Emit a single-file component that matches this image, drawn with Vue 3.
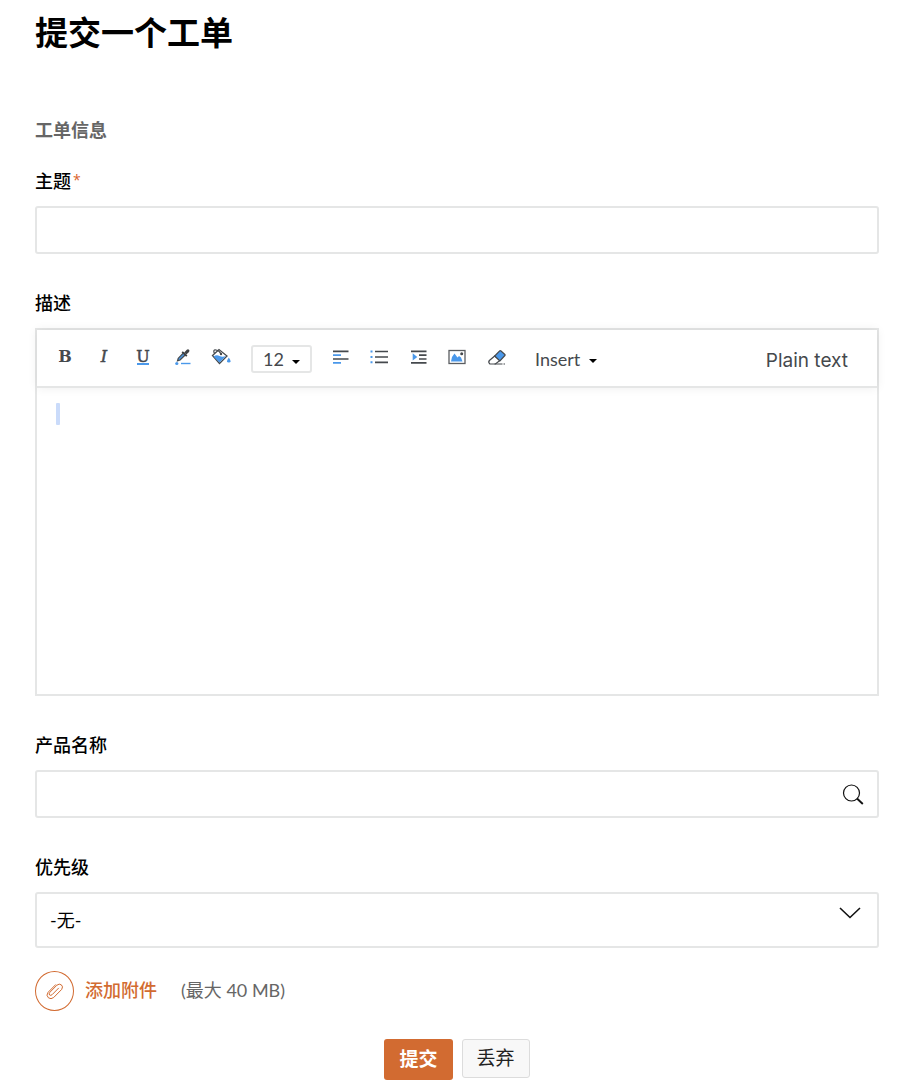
<script setup>
import { ref } from 'vue'

const subject = ref('')
const description = ref('')
const product = ref('')
const priority = ref('none')
const fontSize = ref('12')
</script>

<template>
  <form class="ticket" @submit.prevent>
    <h1 class="title">提交一个工单</h1>
    <h2 class="section">工单信息</h2>

    <div class="field">
      <label for="subject">主题<span class="required">*</span></label>
      <input id="subject" v-model="subject" class="control" type="text" required />
    </div>

    <div class="field">
      <label for="description">描述</label>
      <div class="editor">
        <div class="toolbar">
          <button type="button" class="tool glyph" aria-label="Bold">B</button>
          <button type="button" class="tool glyph italic" aria-label="Italic">I</button>
          <button type="button" class="tool glyph underline" aria-label="Underline">U</button>
          <button type="button" class="tool" aria-label="Font color">
            <svg viewBox="0 0 20 20">
              <path d="M5.500 13.800l.8-2.600 5.200-5.400 2 2-5.400 5.200z" fill="#4c94dc" stroke="#45494d" stroke-width="1.200" />
              <path d="M10.200 4.800l4.600 4.400" stroke="#3f4143" stroke-width="1.800" />
              <path d="M12.200 5.400l2.600-2.600q1.200-1 2.200 0t0 2.200l-2.600 2.600z" fill="#3f4143" />
              <circle cx="4.800" cy="16.500" r="1.600" fill="#4a98ea" />
              <path d="M9 16.500h9.500" stroke="#4a98ea" stroke-width="1.400" />
            </svg>
          </button>
          <button type="button" class="tool" aria-label="Background color">
            <svg viewBox="0 0 20 20">
              <path d="M1.500 8.500L8 2.500l8 6.500-7.500 7.500z" fill="#fff" stroke="#45494d" stroke-width="1.300" />
              <path d="M2.500 9.500q3-2 6-.5t6.500 0l-6.500 6.500z" fill="#4a98ea" />
              <path d="M3.500 6.500Q1.500 2.500 5 3t5 4" fill="none" stroke="#45494d" stroke-width="1.200" />
              <circle cx="10" cy="7" r="1.200" fill="#45494d" />
              <path d="M17.800 10.500q3.400 5 0 5t0-5z" fill="#4a98ea" />
            </svg>
          </button>
          <span class="size">
            <select v-model="fontSize" aria-label="Font size">
              <option value="12">12</option>
            </select>
            <svg class="arrow" viewBox="0 0 8 4"><path d="M0 0h8L4 4z" /></svg>
          </span>
          <button type="button" class="tool" aria-label="Align">
            <svg viewBox="0 0 20 20" fill="none" stroke-width="1.700">
              <path d="M2 4.300h15.500M2 12h15.500" stroke="#45494d" />
              <path d="M2 8.100h8M2 15.800h8" stroke="#4a98ea" />
            </svg>
          </button>
          <button type="button" class="tool" aria-label="List">
            <svg viewBox="0 0 20 20" fill="none" stroke-width="2">
              <path d="M5 4.500h13M5 10h13M5 15.300h13" stroke="#45494d" stroke-width="1.700" />
              <path d="M.5 4.500h2M.5 10h2M.5 15.300h2" stroke="#4a98ea" />
            </svg>
          </button>
          <button type="button" class="tool" aria-label="Indent">
            <svg viewBox="0 0 20 20" fill="none" stroke-width="1.700">
              <path d="M2 4.300h15.500M10 8.100h7.500M10 12h7.500M2 15.800h15.500" stroke="#45494d" />
              <path d="M3.700 6.300l4.600 3.600-4.600 3.600z" fill="#4a98ea" />
            </svg>
          </button>
          <button type="button" class="tool" aria-label="Image">
            <svg viewBox="0 0 20 20">
              <rect x="1" y="3.500" width="16" height="13" fill="#fff" stroke="#5a5d61" stroke-width="1.300" />
              <path d="M3 14.500l1-4.500 2.500-3.500 3 4L11 9l2 1.500 1.500 4z" fill="#4a98ea" />
              <circle cx="13.700" cy="6.700" r="1.500" fill="#45494d" />
            </svg>
          </button>
          <button type="button" class="tool" aria-label="Clear formatting">
            <svg viewBox="0 0 20 20">
              <path d="M7.700 9L2.400 13.500q-1.500 1.800.5 3.500H8.400l4.500-3.500z" fill="#fff" stroke="#45494d" stroke-width="1.200" />
              <path d="M7.700 9l5-5.200q.5-.5 1 0l4.200 3.700q.5.500 0 1l-5 5.500z" fill="#4a98ea" stroke="#45494d" stroke-width="1.200" />
              <path d="M7.500 17h8M16.500 17H18" stroke="#45494d" stroke-width="1.200" />
            </svg>
          </button>
          <button type="button" class="insert">
            Insert
            <svg class="arrow" viewBox="0 0 8 4"><path d="M0 0h8L4 4z" /></svg>
          </button>
          <button type="button" class="plain">Plain text</button>
        </div>
        <div class="canvas">
          <textarea id="description" v-model="description"></textarea>
          <span class="caret"></span>
        </div>
      </div>
    </div>

    <div class="field">
      <label for="product">产品名称</label>
      <div class="control lookup">
        <input id="product" v-model="product" type="text" />
        <button type="button" aria-label="搜索">
          <svg viewBox="0 0 22 22" fill="none" stroke="#111">
            <circle cx="9.500" cy="10" r="8" stroke-width="1.200" />
            <path d="M15 15.500l5.800 5.500" stroke-width="1.900" />
          </svg>
        </button>
      </div>
    </div>

    <div class="field">
      <label for="priority">优先级</label>
      <div class="dropdown">
        <select id="priority" v-model="priority" class="control">
          <option value="none">-无-</option>
        </select>
        <svg class="chevron" viewBox="0 0 22 12" fill="none" stroke="#111" stroke-width="1.600">
          <path d="M1 1l10 9.500L21 1" />
        </svg>
      </div>
    </div>

    <div class="attach">
      <button type="button">
        <span class="ring">
          <svg viewBox="0 0 20 20" fill="none" stroke="#d26b31" stroke-width="1" stroke-linecap="round">
            <path d="M13.500 7.200L7.300 13.500q-1.600 1.500-2.700.5t.3-2.700l7-7.100q2.400-2 4.500-.3t.3 4.500l-8 8.100q-2.700 2.200-5.300.3-2.700-2.400-.3-5.500l7.500-7.600" />
          </svg>
        </span>
        <span class="caption">添加附件</span>
      </button>
      <span class="limit caption">(最大 40 MB)</span>
    </div>

    <div class="actions">
      <button type="submit" class="submit">提交</button>
      <button type="reset" class="discard">丢弃</button>
    </div>
  </form>
</template>

<style>
body {
  background: #fff;
}
</style>

<style scoped>
.ticket {
  padding: 8px 31px 8px 35px;
  font-family: Lato, "Noto Sans CJK SC", sans-serif;
  font-size: 18px;
  line-height: 24px;
  color: #000;
}
.ticket * {
  box-sizing: border-box;
}
button,
input,
select,
textarea {
  margin: 0;
  padding: 0;
  border: 0;
  background: none;
  font: inherit;
  color: inherit;
}
select {
  appearance: none;
}
svg {
  display: block;
}
.title {
  margin: 0;
  font-size: 33px;
  line-height: 48px;
  font-weight: 700;
}
.section {
  margin: 62px 0 27px;
  font-size: 18px;
  line-height: 24px;
  font-weight: 700;
  color: #666;
}
.field {
  margin-bottom: 37px;
}
.field > label {
  display: block;
  height: 24px;
  margin-bottom: 13px;
  font-weight: 500;
}
.required {
  margin-left: 2px;
  font-family: "Open Sans", sans-serif;
  font-size: 14px;
  line-height: 16px;
  vertical-align: 3px;
  color: #d9622b;
}
.control {
  display: block;
  width: 100%;
  height: 48px;
  padding: 0 14px;
  border: 2px solid #e5e6e6;
  border-radius: 3px;
}
.editor {
  border: 2px solid #e5e6e6;
}
.toolbar {
  display: flex;
  align-items: center;
  gap: 19px;
  height: 58px;
  padding: 0 29px 0 18px;
  border-bottom: 2px solid #e5e6e6;
  box-shadow: 0 0 10px rgba(0, 0, 0, 0.07);
  color: #45494d;
}
.tool {
  flex: none;
  width: 20px;
  height: 20px;
  margin-bottom: 2px;
}
.tool svg {
  width: 20px;
  height: 20px;
}
.glyph {
  font-family: "DejaVu Serif", serif;
  font-size: 16px;
  line-height: 20px;
  font-weight: 700;
}
.italic {
  font-weight: 400;
  font-style: italic;
  -webkit-text-stroke: 0.5px;
}
.underline {
  font-weight: 400;
  line-height: 18px;
  -webkit-text-stroke: 0.5px;
  background: linear-gradient(#4a98ea, #4a98ea) center bottom 2px / 12px 2px no-repeat;
}
.size {
  position: relative;
  flex: none;
  width: 61px;
  height: 28px;
  margin: 2px 0 0 1px;
}
.size select {
  width: 100%;
  height: 28px;
  padding-left: 10px;
  border: 2px solid #e5e6e6;
  border-radius: 3px;
}
.arrow {
  width: 8px;
  height: 4px;
  fill: #000;
}
.size .arrow {
  position: absolute;
  top: 15px;
  right: 12px;
  pointer-events: none;
}
.insert {
  display: flex;
  align-items: center;
  gap: 9px;
  margin: 2px 0 0 9px;
}
.insert .arrow {
  margin-top: 4px;
}
.plain {
  margin: 6px 0 0 auto;
  font-family: Inter, sans-serif;
  font-size: 19px;
}
.canvas {
  position: relative;
}
.canvas textarea {
  display: block;
  width: 100%;
  height: 306px;
  padding: 14px 20px;
  resize: none;
}
.caret {
  position: absolute;
  top: 15px;
  left: 19px;
  width: 4px;
  height: 22px;
  border-radius: 1px;
  background: #cadbfa;
}
.lookup {
  display: flex;
  align-items: center;
  padding-right: 13px;
}
.lookup input {
  flex: 1;
  min-width: 0;
  height: 40px;
}
.lookup svg {
  width: 22px;
  height: 22px;
}
.dropdown {
  position: relative;
}
.dropdown .control {
  height: 56px;
  padding: 0 13px;
}
.chevron {
  position: absolute;
  top: 15px;
  right: 18px;
  width: 22px;
  height: 12px;
  pointer-events: none;
}
.attach {
  display: flex;
  align-items: center;
  gap: 24px;
  margin-top: -14px;
}
.attach button {
  display: flex;
  align-items: center;
  gap: 11px;
  font-weight: 500;
  color: #d26b31;
}
.caption {
  padding-bottom: 2px;
}
.ring {
  display: grid;
  place-items: center;
  width: 39px;
  height: 40px;
  border: 1px solid #d26b31;
  border-radius: 50%;
}
.ring svg {
  width: 20px;
  height: 20px;
}
.limit {
  color: #666;
}
.actions {
  display: flex;
  justify-content: center;
  align-items: flex-start;
  gap: 9px;
  margin-top: 28px;
}
.actions button {
  padding: 0 14px 2px;
  border-radius: 3px;
  font-size: 19px;
}
.actions .submit {
  height: 41px;
  padding: 0 15px 2px;
  background: #d26b31;
  color: #fff;
  font-weight: 700;
}
.discard {
  height: 39px;
  border: 1px solid #dcdcdc;
  background: #f8f8f8;
  color: #222;
}
</style>
